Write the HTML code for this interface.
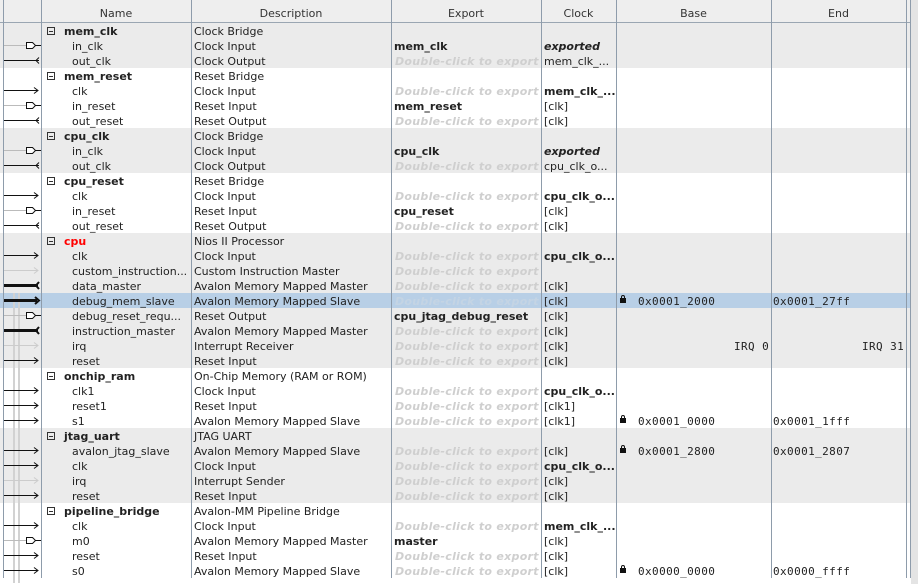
<!DOCTYPE html>
<html><head><meta charset="utf-8"><style>
body{margin:0;width:918px;height:584px;background:#fff;font-family:"DejaVu Sans","Liberation Sans",sans-serif;font-size:11px;color:#222;overflow:hidden;position:relative}
.hd{position:absolute;left:0;top:0;width:910px;height:22px;background:#eeeeee;border-bottom:1px solid #9aa6b2}
.hd span{position:absolute;top:7px;text-align:center;color:#333}
.r{position:absolute;left:0;width:910px;height:15px;line-height:15px;white-space:nowrap}
.g{background:#ebebeb}
.sel{background:#b8cfe6}
.r span{position:absolute;top:1px}
.n{left:72px}
.gn{left:64px;font-weight:bold}
.bx{left:47px;top:4px!important;width:8px;height:8px;border:1px solid #333;box-sizing:border-box}
.bx:after{content:"";position:absolute;left:1px;top:3px;width:4px;height:1px;background:#333}
.d{left:194px}
.e{left:394px;font-weight:bold}
.x{left:395px;font-weight:bold;font-style:italic;color:#cfcfcf;letter-spacing:0.3px}
.c{left:544px}
.cb{left:544px;font-weight:bold}
.ci{left:544px;font-weight:bold;font-style:italic}
.b{left:638px;font-family:"DejaVu Sans Mono","Liberation Mono",monospace;letter-spacing:0.4px}
.lk{left:620px;top:5px!important;width:6px;height:5px;background:#111}
.lk:before{content:"";position:absolute;left:1px;top:-3px;width:2px;height:3px;border:1px solid #111;border-bottom:none;border-radius:2px 2px 0 0}
.en{left:773px;font-family:"DejaVu Sans Mono","Liberation Mono",monospace;letter-spacing:0.4px}
.v{position:absolute;top:0;width:1px;height:578px;background:#8e9cab}
</style></head><body>
<div class="hd"><span style="left:41px;width:150px">Name</span><span style="left:191px;width:200px">Description</span><span style="left:391px;width:150px">Export</span><span style="left:541px;width:75px">Clock</span><span style="left:616px;width:155px">Base</span><span style="left:771px;width:135px">End</span></div>

<div class="r g" style="top:23px"><span class="bx"></span><span class="gn">mem_clk</span><span class="d">Clock Bridge</span></div>
<div class="r g" style="top:38px"><span class="n">in_clk</span><span class="d">Clock Input</span><span class="e">mem_clk</span><span class="ci">exported</span></div>
<div class="r g" style="top:53px"><span class="n">out_clk</span><span class="d">Clock Output</span><span class="x">Double-click to export</span><span class="c">mem_clk_...</span></div>
<div class="r" style="top:68px"><span class="bx"></span><span class="gn">mem_reset</span><span class="d">Reset Bridge</span></div>
<div class="r" style="top:83px"><span class="n">clk</span><span class="d">Clock Input</span><span class="x">Double-click to export</span><span class="cb">mem_clk_...</span></div>
<div class="r" style="top:98px"><span class="n">in_reset</span><span class="d">Reset Input</span><span class="e">mem_reset</span><span class="c">[clk]</span></div>
<div class="r" style="top:113px"><span class="n">out_reset</span><span class="d">Reset Output</span><span class="x">Double-click to export</span><span class="c">[clk]</span></div>
<div class="r g" style="top:128px"><span class="bx"></span><span class="gn">cpu_clk</span><span class="d">Clock Bridge</span></div>
<div class="r g" style="top:143px"><span class="n">in_clk</span><span class="d">Clock Input</span><span class="e">cpu_clk</span><span class="ci">exported</span></div>
<div class="r g" style="top:158px"><span class="n">out_clk</span><span class="d">Clock Output</span><span class="x">Double-click to export</span><span class="c">cpu_clk_o...</span></div>
<div class="r" style="top:173px"><span class="bx"></span><span class="gn">cpu_reset</span><span class="d">Reset Bridge</span></div>
<div class="r" style="top:188px"><span class="n">clk</span><span class="d">Clock Input</span><span class="x">Double-click to export</span><span class="cb">cpu_clk_o...</span></div>
<div class="r" style="top:203px"><span class="n">in_reset</span><span class="d">Reset Input</span><span class="e">cpu_reset</span><span class="c">[clk]</span></div>
<div class="r" style="top:218px"><span class="n">out_reset</span><span class="d">Reset Output</span><span class="x">Double-click to export</span><span class="c">[clk]</span></div>
<div class="r g" style="top:233px"><span class="bx"></span><span class="gn" style="color:#f00">cpu</span><span class="d">Nios II Processor</span></div>
<div class="r g" style="top:248px"><span class="n">clk</span><span class="d">Clock Input</span><span class="x">Double-click to export</span><span class="cb">cpu_clk_o...</span></div>
<div class="r g" style="top:263px"><span class="n">custom_instruction...</span><span class="d">Custom Instruction Master</span><span class="x">Double-click to export</span></div>
<div class="r g" style="top:278px"><span class="n">data_master</span><span class="d">Avalon Memory Mapped Master</span><span class="x">Double-click to export</span><span class="c">[clk]</span></div>
<div class="r sel" style="top:293px"><span class="n">debug_mem_slave</span><span class="d">Avalon Memory Mapped Slave</span><span class="x" style="color:#c4d4e4">Double-click to export</span><span class="c">[clk]</span><span class="lk"></span><span class="b">0x0001_2000</span><span class="en">0x0001_27ff</span></div>
<div class="r g" style="top:308px"><span class="n">debug_reset_requ...</span><span class="d">Reset Output</span><span class="e">cpu_jtag_debug_reset</span><span class="c">[clk]</span></div>
<div class="r g" style="top:323px"><span class="n">instruction_master</span><span class="d">Avalon Memory Mapped Master</span><span class="x">Double-click to export</span><span class="c">[clk]</span></div>
<div class="r g" style="top:338px"><span class="n">irq</span><span class="d">Interrupt Receiver</span><span class="x">Double-click to export</span><span class="c">[clk]</span><span class="b" style="left:734px">IRQ 0</span><span class="en" style="left:862px">IRQ 31</span></div>
<div class="r g" style="top:353px"><span class="n">reset</span><span class="d">Reset Input</span><span class="x">Double-click to export</span><span class="c">[clk]</span></div>
<div class="r" style="top:368px"><span class="bx"></span><span class="gn">onchip_ram</span><span class="d">On-Chip Memory (RAM or ROM)</span></div>
<div class="r" style="top:383px"><span class="n">clk1</span><span class="d">Clock Input</span><span class="x">Double-click to export</span><span class="cb">cpu_clk_o...</span></div>
<div class="r" style="top:398px"><span class="n">reset1</span><span class="d">Reset Input</span><span class="x">Double-click to export</span><span class="c">[clk1]</span></div>
<div class="r" style="top:413px"><span class="n">s1</span><span class="d">Avalon Memory Mapped Slave</span><span class="x">Double-click to export</span><span class="c">[clk1]</span><span class="lk"></span><span class="b">0x0001_0000</span><span class="en">0x0001_1fff</span></div>
<div class="r g" style="top:428px"><span class="bx"></span><span class="gn">jtag_uart</span><span class="d">JTAG UART</span></div>
<div class="r g" style="top:443px"><span class="n">avalon_jtag_slave</span><span class="d">Avalon Memory Mapped Slave</span><span class="x">Double-click to export</span><span class="c">[clk]</span><span class="lk"></span><span class="b">0x0001_2800</span><span class="en">0x0001_2807</span></div>
<div class="r g" style="top:458px"><span class="n">clk</span><span class="d">Clock Input</span><span class="x">Double-click to export</span><span class="cb">cpu_clk_o...</span></div>
<div class="r g" style="top:473px"><span class="n">irq</span><span class="d">Interrupt Sender</span><span class="x">Double-click to export</span><span class="c">[clk]</span></div>
<div class="r g" style="top:488px"><span class="n">reset</span><span class="d">Reset Input</span><span class="x">Double-click to export</span><span class="c">[clk]</span></div>
<div class="r" style="top:503px"><span class="bx"></span><span class="gn">pipeline_bridge</span><span class="d">Avalon-MM Pipeline Bridge</span></div>
<div class="r" style="top:518px"><span class="n">clk</span><span class="d">Clock Input</span><span class="x">Double-click to export</span><span class="cb">mem_clk_...</span></div>
<div class="r" style="top:533px"><span class="n">m0</span><span class="d">Avalon Memory Mapped Master</span><span class="e">master</span><span class="c">[clk]</span></div>
<div class="r" style="top:548px"><span class="n">reset</span><span class="d">Reset Input</span><span class="x">Double-click to export</span><span class="c">[clk]</span></div>
<div class="r" style="top:563px"><span class="n">s0</span><span class="d">Avalon Memory Mapped Slave</span><span class="x">Double-click to export</span><span class="c">[clk]</span><span class="lk"></span><span class="b">0x0000_0000</span><span class="en">0x0000_ffff</span></div>

<div class="v" style="left:3px"></div><div class="v" style="left:41px"></div><div class="v" style="left:191px"></div><div class="v" style="left:391px"></div><div class="v" style="left:541px"></div><div class="v" style="left:616px"></div><div class="v" style="left:771px"></div><div class="v" style="left:906px"></div><div class="v" style="left:910px"></div>
<div style="position:absolute;left:911px;top:0;width:7px;height:584px;background:#e4e4e4"></div>

<svg style="position:absolute;left:0;top:23px" width="41" height="560" viewBox="0 0 41 560">
<defs>
<g id="in"><path d="M4 7.5H38M34 4.5L38 7.5L34 10.5" stroke="#111" fill="none"/></g>
<g id="out"><path d="M4 7.5H39M39 4.5L36 7.5L39 10.5" stroke="#111" fill="none"/></g>
<g id="ex"><path d="M4 7.5H26" stroke="#bbb"/><path d="M26.5 4.5H32.5L35.5 7.5L32.5 10.5H26.5Z" stroke="#111" fill="#fff"/><path d="M35.5 7.5H41" stroke="#111"/></g>
<g id="fin"><path d="M4 7.5H38M34 4.5L38 7.5L34 10.5" stroke="#ccc" fill="none"/></g>
<g id="tout"><path d="M4 7.5H38" stroke="#111" stroke-width="3"/><path d="M39 4L36 7.5L39 11" stroke="#111" stroke-width="2" fill="none"/></g>
<g id="tin"><path d="M4 7.5H37" stroke="#111" stroke-width="3"/><path d="M35 4L39 7.5L35 11" stroke="#111" stroke-width="2" fill="none"/></g>
</defs>
<path d="M19 270V560M14 270V560" stroke="#d2d2d2" stroke-width="2" fill="none"/>
<use href="#ex" y="15"/><use href="#out" y="30"/>
<use href="#in" y="60"/><use href="#ex" y="75"/><use href="#out" y="90"/>
<use href="#ex" y="120"/><use href="#out" y="135"/>
<use href="#in" y="165"/><use href="#ex" y="180"/><use href="#out" y="195"/>
<use href="#in" y="225"/><use href="#fin" y="240"/><use href="#tout" y="255"/><use href="#tin" y="270"/><use href="#ex" y="285"/><use href="#tout" y="300"/><use href="#fin" y="315"/><use href="#in" y="330"/>
<use href="#in" y="360"/><use href="#in" y="375"/><use href="#in" y="390"/>
<use href="#in" y="420"/><use href="#in" y="435"/><use href="#fin" y="450"/><use href="#in" y="465"/>
<use href="#in" y="495"/><use href="#ex" y="510"/><use href="#in" y="525"/><use href="#in" y="540"/>
</svg>
</body></html>
